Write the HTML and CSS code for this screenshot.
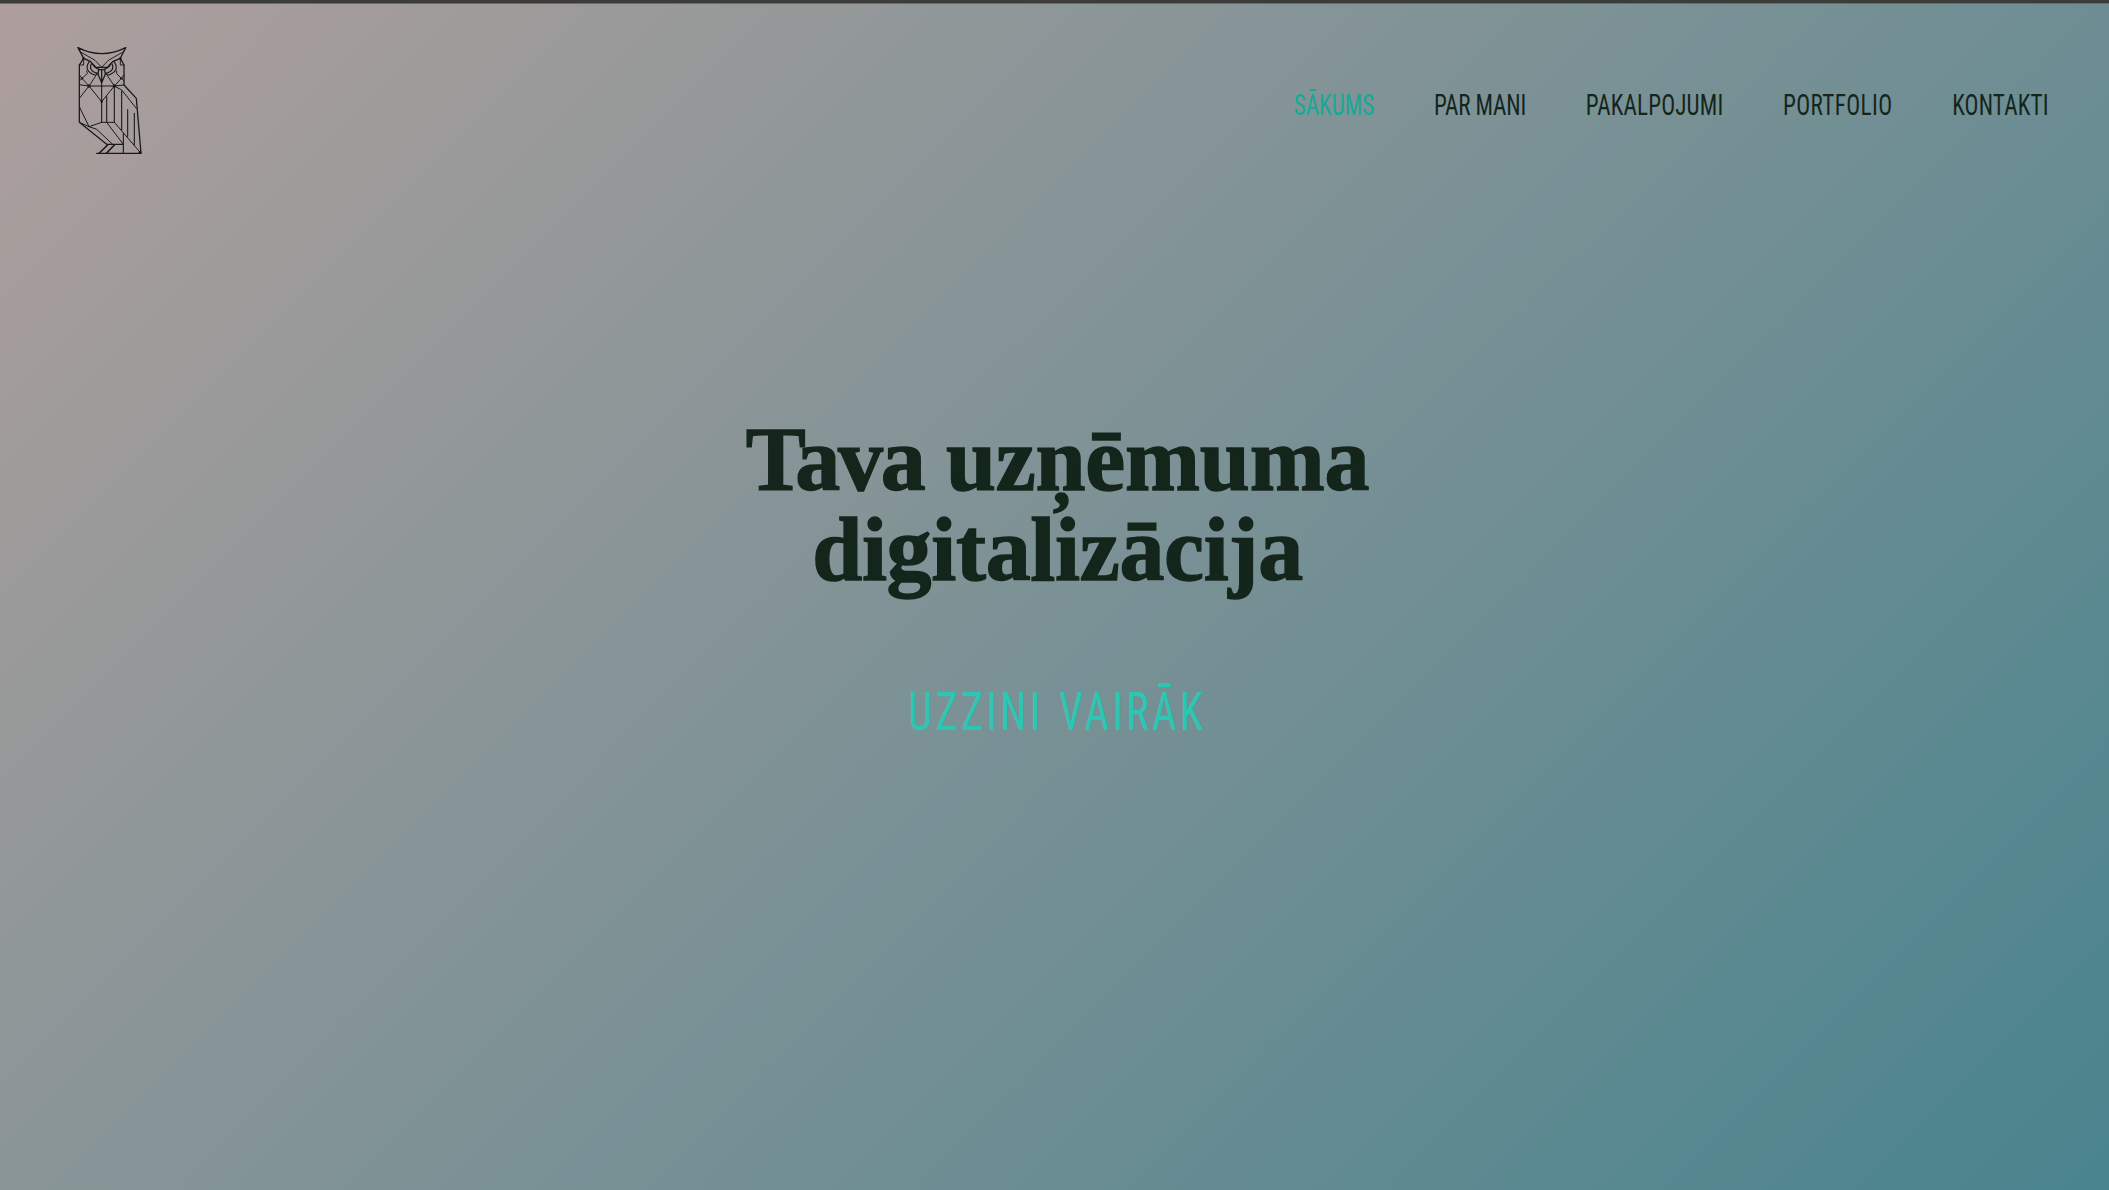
FILE: index.html
```html
<!DOCTYPE html>
<html lang="lv">
<head>
<meta charset="utf-8">
<title>Tava uzņēmuma digitalizācija</title>
<link rel="stylesheet" href="styles.css">
</head>
<body>
<header class="header">
  <a class="logo" href="#" aria-label="Sākums">
    <svg viewBox="0 0 300 390" width="100" height="130" fill="none" stroke="#17191a" stroke-width="3.8" stroke-linejoin="round" stroke-linecap="round">
      <path d="M54 38Q125 74 197 38L181 70L158 80L142 97H108L92 80L71 70Z"/>
      <path d="M54 38L60 50L105 76L125 97L145 76L191 50L197 38" stroke-width="2.8"/>
      <path d="M71 70L58 90V262L140 328H190M181 70L192 90V150L229 190L243 355H110"/>
      <path d="M71 70V90H58M181 70V90H192M80 108L82 116L66 130L87 153L107 123M170 108V116L184 130L163 153L143 123M58 120L66 130L58 138M192 120L184 130L192 138" stroke-width="2.8"/>
      <path d="M88 80Q68 108 107 121L113 115Q84 108 94 86M162 80Q182 108 143 121L137 115Q166 108 156 86M98 88Q103 99 118 103M152 88Q147 99 132 103" stroke-width="3.4"/>
      <path d="M116 104H134L136 118L125 143L114 118ZM125 104V143"/>
      <path d="M87 153H163L125 200L87 153L58 190M58 149L87 153M163 153L192 150" stroke-width="3"/>
      <path d="M125 143V262M140 185V262M163 153V262M185 168V285M190 295V355M203 224V304M223 235V330" stroke-width="3.3"/>
      <path d="M58 215L87 275L125 262H163L243 355M58 262L87 275L110 283L160 330M140 262L190 328M163 153L185 165L229 220" stroke-width="3"/>
      <path d="M143 330L118 354M163 330L140 354" stroke-width="5"/>
      <g fill="#17191a" stroke="none"><circle cx="87" cy="153" r="5"/><circle cx="163" cy="153" r="5"/><circle cx="66" cy="130" r="3.5"/><circle cx="184" cy="130" r="3.5"/><circle cx="125" cy="200" r="3.5"/><circle cx="71" cy="70" r="3.5"/><circle cx="181" cy="70" r="3.5"/><circle cx="240" cy="352" r="4"/></g>
    </svg>
  </a>
  <nav class="nav">
    <a class="link active" href="#">SĀKUMS</a>
    <a class="link link-about" href="#">PAR MANI</a>
    <a class="link" href="#">PAKALPOJUMI</a>
    <a class="link link-portfolio" href="#">PORTFOLIO</a>
    <a class="link" href="#">KONTAKTI</a>
  </nav>
</header>
<main class="hero">
  <h1 class="title"><span class="line"><span class="tight">Tava</span> <span class="loose">uzņēmuma</span></span><span class="line">digitalizācija</span></h1>
  <a class="more" href="#">UZZINI VAIRĀK</a>
</main>
</body>
</html>
```
FILE: styles.css
```css
* { box-sizing: border-box; }
body {
  margin: 0;
  min-height: 1190px;
  border-top: 3px solid #3c3c3b;
  background: linear-gradient(135deg, #ae9f9d, #49848e);
  box-shadow: inset 0 1px 0 #6b6a6b;
  color: #14261c;
  font-family: Roboto, sans-serif;
  font-stretch: 75%;
}
.header {
  display: flex;
  justify-content: space-between;
  align-items: flex-start;
  height: 170px;
  padding: 32px 60px 0 60px;
}
.logo { display: block; line-height: 0; }
/* Squeezed horizontally for an extra-condensed look */
.nav {
  display: flex;
  gap: 76px;
  padding-top: 52px;
  transform: scaleX(.785);
  transform-origin: right;
}
.link {
  color: inherit;
  text-decoration: none;
  font-size: 29.5px;
  line-height: 36px;
  font-weight: 400;
  letter-spacing: .2px;
}
.link-about { letter-spacing: -.2px; }
.link-portfolio { letter-spacing: .5px; }
.active { color: #16a996; letter-spacing: 0; }
.hero {
  display: flex;
  flex-direction: column;
  align-items: center;
  padding: 242px 0 0 6px;
}
.title {
  margin: 0;
  font: 700 90px/90px "Liberation Serif", serif;
  text-align: center;
  -webkit-text-stroke: 1.4px #14261c;
}
.line { display: block; letter-spacing: -.3px; }
.tight { letter-spacing: -2.2px; }
.loose { letter-spacing: -.2px; }
.more {
  margin-top: 85px;
  color: #2cc6b2;
  text-decoration: none;
  font-size: 53.5px;
  line-height: 64px;
  font-weight: 400;
  letter-spacing: 3.9px;
  word-spacing: 3px;
  transform: scaleX(.8);
}
```
